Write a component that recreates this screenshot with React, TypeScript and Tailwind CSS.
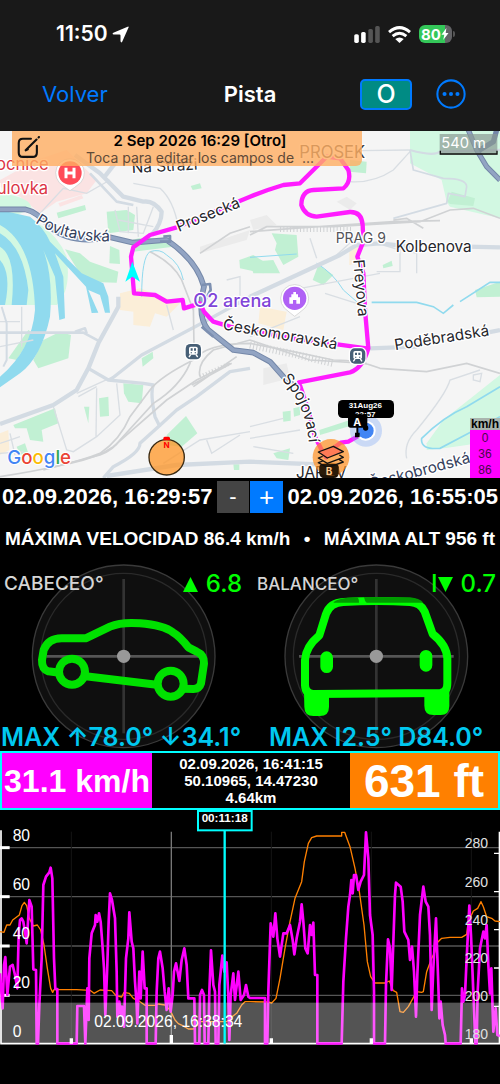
import React from 'react';

const SPEED_TRACE =
    '0,445 8,550 12,420 16,396 22,510 30,425 38,420 45,450 52,490 56,330 60,285 65,280 70,290 75,320 80,355 84,290 88,225 95,245 100,433 108,435 110,655 114,655 118,540 125,400 130,180 138,155 148,142 152,128 157,160 162,400 166,492 172,492 172,655 230,655 232,543 252,543 256,655 262,490 266,585 268,400 275,325 285,300 287,270 292,290 297,265 302,290 308,370 312,430 316,570 322,420 326,290 330,205 336,225 345,280 350,440 352,575 358,530 362,570 366,545 372,605 378,400 385,340 388,262 395,350 400,370 405,470 410,540 412,595 418,440 422,520 428,380 434,490 440,490 440,655 467,655 470,500 475,400 480,380 488,430 494,500 500,555 506,490 512,560 518,510 522,440 528,415 538,468 545,405 553,370 560,420 565,520 583,520 585,655 598,655 600,510 606,495 612,510 614,655 625,655 628,500 633,376 640,480 645,500 647,655 655,655 658,480 667,392 673,440 680,412 685,515 688,645 692,510 700,445 705,525 715,440 722,525 732,510 738,480 745,515 750,519 795,519 795,655 802,655 805,500 812,295 820,335 826,265 832,340 840,395 850,325 860,325 870,300 878,345 883,388 890,340 900,290 905,238 910,290 916,370 923,385 930,300 935,330 940,293 945,450 952,450 952,655 1025,655 1030,470 1038,340 1045,245 1050,210 1054,165 1058,205 1062,150 1068,150 1075,195 1082,170 1092,150 1098,22 1105,100 1110,270 1118,330 1122,500 1122,655 1155,655 1158,480 1164,343 1170,370 1175,495 1180,350 1185,210 1188,173 1202,185 1208,230 1213,320 1225,345 1230,405 1236,365 1242,440 1248,575 1252,450 1260,270 1270,185 1277,230 1285,245 1290,330 1295,555 1300,430 1308,280 1315,480 1318,580 1322,530 1328,600 1335,630 1337,655 1382,655 1386,490 1390,530 1395,510 1400,400 1408,242 1413,330 1420,500 1426,655 1430,655 1433,500 1440,370 1450,320 1455,340 1460,300 1465,420 1470,505 1474,430 1480,620 1487,550 1492,630 1500,633';

const ALTITUDE_TRACE =
    '0,320 12,322 20,300 30,300 38,285 58,270 66,242 73,232 80,242 88,280 100,303 112,300 122,315 132,360 142,430 152,490 158,502 162,494 230,494 270,496 282,505 300,495 335,497 348,512 365,516 372,502 388,505 400,520 420,530 435,541 465,541 475,537 495,540 510,555 525,585 535,596 548,602 565,612 580,612 600,590 640,590 680,590 690,580 710,565 725,540 735,530 750,530 805,531 815,534 828,520 840,460 855,370 870,290 885,220 905,170 913,110 925,55 935,38 950,33 1025,33 1025,22 1034,22 1050,65 1065,130 1078,200 1092,300 1102,410 1112,455 1125,474 1155,474 1168,468 1180,497 1190,502 1200,560 1210,562 1225,545 1250,500 1265,502 1270,500 1280,440 1295,400 1305,380 1310,355 1325,340 1350,337 1385,337 1400,328 1405,290 1420,258 1433,250 1443,230 1450,245 1460,275 1475,280 1485,288 1500,290';

const speedTicks = [
    { label: '80', y: 47, line: 68 },
    { label: '60', y: 194, line: 215 },
    { label: '40', y: 342, line: 363 },
    { label: '20', y: 489, line: 511 },
    { label: '0', y: 637, line: 656 },
];

const altitudeTicks = [
    { label: '280', y: 70 },
    { label: '260', y: 185 },
    { label: '240', y: 299 },
    { label: '220', y: 414 },
    { label: '200', y: 528 },
    { label: '180', y: 643 },
];

const StatusBar: React.FC = () => (
    <div className="flex items-center justify-between px-14 pt-5 font-['Inter',sans-serif]">
        <div className="flex items-center gap-1 text-[21px] leading-7 font-semibold">
            11:50
            <svg viewBox="0 0 50 50" className="h-[17px] w-[17px]" fill="currentColor" aria-hidden="true">
                <path d="M46 2Q51 0 48 6L30 46Q27 51 25 45V28Q25 25 22 25H5Q-1 23 4 20Z" />
            </svg>
        </div>
        <div className="-mr-2 flex items-center gap-2">
            <svg viewBox="0 0 78 52" className="h-[17px] w-[26px]" aria-hidden="true">
                <rect x="0" y="25" width="14" height="27" rx="5" fill="#fff" />
                <rect x="21" y="18" width="14" height="34" rx="5" fill="#fff" />
                <rect x="43" y="9" width="14" height="43" rx="5" fill="#555" />
                <rect x="64" y="0" width="14" height="52" rx="5" fill="#555" />
            </svg>
            <svg viewBox="0 0 70 52" className="h-[17px] w-[23px]" fill="none" stroke="#fff" strokeWidth="9" aria-hidden="true">
                <path d="M3 19Q35-9 67 19" />
                <path d="M14 31Q35 13 56 31" />
                <path d="M35 52L22 40Q35 30 48 40Z" fill="#fff" stroke="none" />
            </svg>
            <div className="relative flex h-[18px] w-[33px] items-center rounded-md bg-[linear-gradient(to_right,#34c759_78%,#636366_78%)] pl-[2px] text-[15px] leading-none font-bold">
                80
                <svg viewBox="0 0 20 34" className="h-3 w-2" fill="#fff" aria-hidden="true">
                    <path d="M14 0L0 19H8L5 34L20 14H12Z" />
                </svg>
                <span className="absolute top-[6px] -right-[3px] h-[6px] w-[2px] rounded-r bg-[#555]" />
            </div>
        </div>
    </div>
);

const NavBar: React.FC = () => (
    <header className="grid grid-cols-[1fr_auto_1fr] items-center px-[34px] pt-[30px] pb-[21px] font-['Inter',sans-serif] text-[22px] leading-8">
        <button className="justify-self-start pl-2 text-[#007aff]">Volver</button>
        <h1 className="text-center font-semibold">Pista</h1>
        <div className="flex items-center gap-6 justify-self-end">
            <button className="flex h-[31px] w-[52px] items-center justify-center rounded-[5px] border-2 border-[#007aff] bg-[#008b84] text-[25px] leading-none font-medium">
                O
            </button>
            <button aria-label="Más opciones">
                <svg viewBox="0 0 88 88" className="h-[30px] w-[30px]" fill="#007aff">
                    <circle cx="44" cy="44" r="40" fill="none" stroke="#007aff" strokeWidth="6" />
                    <circle cx="25" cy="44" r="6" />
                    <circle cx="44" cy="44" r="6" />
                    <circle cx="63" cy="44" r="6" />
                </svg>
            </button>
        </div>
    </header>
);

const StationMarker: React.FC<{ x: number; y: number }> = ({ x, y }) => (
    <g transform={`translate(${x} ${y})`}>
        <rect x="-27" y="-27" width="54" height="54" rx="18" fill="#fff" />
        <rect x="-23" y="-23" width="46" height="46" rx="14" fill="#475f76" />
        <rect x="-13" y="-15" width="26" height="24" rx="5" fill="#fff" />
        <path d="M-8-10H-2V-3H-8ZM2-10H8V-3H2ZM-8 2H-4V5H-8ZM4 2H8V5H4Z" fill="#475f76" />
        <path d="M-8 9L-13 16M8 9L13 16" stroke="#fff" strokeWidth="4" />
    </g>
);

const MapDrawing: React.FC = () => (
    <svg viewBox="0 3 1500 1041" className="block w-full bg-[#f5f5f5] font-['Inter',sans-serif]" role="img" aria-label="Mapa del recorrido">
        <defs>
            <path id="povltavska" d="M105 277Q190 338 345 334" />
            <path id="spojovaci" d="M844 748Q915 815 926 935" />
        </defs>

        {/* built-up areas */}
        <g fill="#fbe3e3">
            <path d="M0 150L110 90L200 60L290 150L260 190L170 215L120 250L60 200L0 170Z" />
            <path d="M175 220L245 195L250 205L180 230Z" />
        </g>
        <g fill="#fbeed8">
            <path d="M360 490L420 475L540 520L500 560L465 550L450 590L400 585L400 545L360 540Z" />
            <path d="M780 530L860 545L850 600L775 580Z" />
            <path d="M1048 350L1075 345L1070 400L1048 405Z" />
            <path d="M0 910L25 900L28 960L0 975Z" />
        </g>
        <g fill="#ebebeb">
            <path d="M1010 215L1040 200L1070 220L1050 240Z" />
            <path d="M790 715L860 700L870 745L790 765Z" />
            <path d="M600 350L750 300L740 330L600 370Z" />
            <path d="M750 270L800 255L830 285L760 300Z" />
        </g>

        {/* parks */}
        <g fill="#d2f8e2">
            <path d="M1230 0H1500V265L1350 230L1340 215L1325 150L1230 100Z" />
            <path d="M0 190Q90 200 95 235L50 255L0 240Z" />
            <path d="M0 250Q150 260 200 380Q215 480 170 525H0Z" />
            <path d="M1280 940L1330 870L1500 735V925Q1400 950 1280 960Z" />
        </g>
        <g fill="#c1f0d3">
            <path d="M1342 215L1355 185L1425 205L1420 228L1350 222Z" />
            <path d="M320 245L380 240L405 255L400 300L325 310Z" />
            <path d="M170 248L255 225L258 240L175 265Z" />
            <path d="M330 348L358 360L360 402L328 400Z" />
            <path d="M195 358L240 370L270 395L355 425L350 458L255 455Z" />
            <path d="M395 330Q460 310 520 350L400 365Z" />
            <path d="M572 168L600 160L605 175L578 180Z" />
            <path d="M718 390L760 375L800 400L790 430L720 415Z" />
            <path d="M815 310L890 315L895 380L850 405L825 360L830 340Z" />
            <path d="M750 395L820 390L840 430L760 430Z" />
            <path d="M955 405L1000 435L970 465L938 450Z" />
            <path d="M1148 405L1175 392L1178 408L1150 415Z" />
            <path d="M1050 90L1100 95L1098 130L1048 125Z" />
            <path d="M1425 480L1500 455V500L1430 502Z" />
            <path d="M130 630L180 605L213 615L205 685L115 715L100 690Z" />
            <path d="M25 685L85 600L100 610L50 690Z" />
            <path d="M425 685L458 665L460 685L428 710Z" />
            <path d="M370 760L430 765L425 820L385 815L372 790Z" />
            <path d="M297 805L325 800L327 858L300 860Z" />
            <path d="M252 830H268L265 880Z" />
            <path d="M40 885L165 835L175 880L125 900L130 935L90 930L80 895L45 895Z" />
            <path d="M500 915L558 858L592 910L545 950L500 945Z" />
            <path d="M848 845L872 842V872L850 875ZM880 835L900 830V855L882 860Z" />
            <path d="M820 970L870 955L865 990L830 985Z" />
            <path d="M958 900L1050 870L1060 885L960 915Z" />
            <path d="M50 950L75 940L85 970L60 975Z" />
            <path d="M700 1003H718V1020H702Z" />
        </g>

        {/* river */}
        <g fill="#90daee">
            <path d="M0 240L90 260Q130 290 150 335L245 430L310 460L325 500L330 548H315L300 495L265 480L295 548L275 549L258 470L165 370L190 440L195 565L178 570L165 440L130 360Q160 440 150 560Q125 680 60 730L0 772V740Q95 660 105 540Q100 340 0 285Z" />
            <path d="M0 310Q70 350 85 480L80 525H35Q50 380 0 350Z" />
            <path d="M0 390Q35 430 15 525H0Z" />
        </g>
        <g fill="none" stroke="#90daee" strokeWidth="5">
            <path d="M425 500Q425 380 450 365Q480 355 500 375Q540 400 550 450" strokeWidth="3" />
            <path d="M750 382L890 372M950 400Q1000 430 1030 480L1070 515" strokeWidth="3" />
            <path d="M1115 517H1250L1300 530L1330 550L1360 525" />
            <path d="M1500 770L1400 830Q1330 860 1265 925Q1260 960 1320 955L1500 860" />
            <path d="M1380 515L1470 457H1500" />
        </g>

        {/* side streets */}
        <g fill="none" stroke="#d9dee3" strokeWidth="4">
            <path d="M120 250L190 175L260 190L330 150M345 240L360 305L430 310L460 230M385 310V230M410 230L415 320M355 270L460 290M400 160L480 175Q520 210 535 290" />
            <path d="M1080 62L1230 60M1050 155Q1120 160 1180 120L1230 65M1150 345L1200 360V425H1130M1185 355L1250 370V430M1140 430L850 485" />
            <path d="M975 490L1070 520M930 325L950 385M1070 320L1010 375" />
            <path d="M0 650L100 630M65 530V650M0 575H60M160 830L200 960L220 965L290 920L360 855L350 760M290 775L288 920M230 790L340 740M235 800L290 770" />
            <path d="M490 1000L600 930L750 905M620 930L635 970L720 915" />
            <path d="M1220 985Q1210 940 1250 900Q1340 790 1350 750L1440 720M1420 735L1445 730L1440 755L1420 750Z" />
            <path d="M0 940L60 920M0 970L70 965M30 910L45 975M750 890L850 865M750 925L900 900M760 950L880 970" />
            <path d="M750 620L900 560M680 450L720 440V500M500 525L520 600" />
        </g>
        <g fill="none" stroke="#d3dbe3" strokeWidth="13" strokeLinejoin="round">
            <path d="M225 75L300 130L370 200L430 215Q460 210 485 245Q485 280 455 315" />
            <path d="M270 130L350 215L400 225" strokeWidth="8" />
            <path d="M345 100L310 145" />
            <path d="M750 500L1020 375L1070 345L1140 340L1230 350" />
            <path d="M1400 350L1500 352" />
            <path d="M1110 655L1250 650M1450 610L1500 600" />
            <path d="M0 882L160 825L230 780L265 715L295 640L355 530V500" />
            <path d="M265 715L325 750L430 760L460 765Q450 790 465 860L480 890M330 750L425 675L605 580L750 500" strokeWidth="10" />
            <path d="M310 1044L340 1010Q420 970 420 940L475 890L530 840L590 800L690 725L750 715" strokeWidth="10" />
            <path d="M320 1038L530 1005L750 995L1000 1005" />
            <path d="M0 608L250 608L300 635M225 605L255 595L260 610" strokeWidth="8" />
            <path d="M1230 60Q1300 80 1320 65L1500 60" strokeWidth="7" />
            <path d="M1230 60L1240 120L1330 145Q1400 145 1400 170L1395 200L1345 190L1340 220L1180 265" strokeWidth="5" />
            <path d="M5 530L20 580V690L10 710" strokeWidth="6" />
        </g>

        {/* railways */}
        <g fill="none" stroke="#d0d2d4" strokeWidth="5">
            <path d="M0 1040Q200 1010 300 970Q360 930 390 860L450 780Q480 740 580 690Q620 640 750 640L880 665L1000 690Q1080 690 1140 715L1280 725L1400 700L1500 730" />
            <path d="M130 1020L300 975Q340 960 360 930L460 820Q540 770 570 700L580 650" />
            <path d="M210 1000Q290 985 340 950L500 810L590 750L690 700" />
            <path d="M580 525L582 650M600 740Q590 700 640 660L750 630L930 690L1100 700" />
            <path d="M580 770L710 680M575 765L695 700" />
            <path d="M750 315L800 290L1000 290L1260 275L1350 240L1420 235L1500 265M750 305L880 295L1180 275L1320 272M1180 270L1220 265L1270 295" />
            <path d="M450 365Q520 400 545 450L580 540M600 370L690 310L750 290" />
        </g>
        <g fill="none" stroke="#d0d2d4" strokeWidth="22" strokeDasharray="3 7">
            <path d="M750 645L880 672L1000 700" />
            <path d="M840 298H1060" strokeWidth="16" />
            <path d="M600 740L690 700" strokeWidth="12" />
        </g>

        {/* main roads */}
        <g fill="none" strokeLinejoin="round">
            <path d="M0 238L75 238Q110 245 150 290Q210 345 330 322L400 338L500 330Q590 390 612 470Q590 560 625 600L700 660L760 668L810 695L850 740L880 765" stroke="#7487a8" strokeWidth="17" />
            <path d="M0 238L75 238Q110 245 150 290Q210 345 330 322L400 338L500 330Q590 390 612 470Q590 560 625 600L700 660L760 668L810 695L850 740L880 765" stroke="#92a4c3" strokeWidth="11" />
            <path d="M605 465L630 462L632 480L600 540M490 320L510 318V335L480 335M605 590L640 620" stroke="#7d90b1" strokeWidth="8" />
            <path d="M1405 0L1430 60L1460 110L1500 150M1430 65L1480 35L1490 0" stroke="#7487a8" strokeWidth="16" />
            <path d="M1405 0L1430 60L1460 110L1500 150" stroke="#92a4c3" strokeWidth="10" />
        </g>

        {/* recorded track */}
        <g fill="none" stroke="#ff1cff" strokeWidth="13" strokeLinejoin="round" strokeLinecap="round">
            <path d="M1072 920L1045 935L1022 938L1000 955L978 982L965 960L945 920L925 840L897 757L1050 727Q1088 715 1105 655L1095 540L1090 430L1072 380L1090 335L1088 285Q1085 245 1050 246L950 260Q915 258 904 225Q905 182 940 180L1030 175Q1055 155 1045 120L1020 85L980 80L900 160L850 165Q800 180 750 200L690 225L530 292L450 315L400 352L393 380L402 490L465 495L500 515L548 510L552 535L600 520L612 545L640 575L690 590L880 625L1100 655" />
        </g>
        <path d="M397 395L420 455L397 440L376 455Z" fill="#00ffff" />

        {/* street and place names */}
        <g fill="#26262b" stroke="#fff" strokeWidth="8" strokeLinejoin="round" fontSize="46" className="[paint-order:stroke]">
            <text x="396" y="129" transform="rotate(-3 396 129)">Na Stráži</text>
            <text x="536" y="306" transform="rotate(-22 536 306)">Prosecká</text>
            <text fill="#34405c" fontSize="46"><textPath href="#povltavska">Povltavská</textPath></text>
            <text x="1187" y="366">Kolbenova</text>
            <text x="1060" y="390" transform="rotate(85 1060 390)" fontSize="46">Freyova</text>
            <text x="667" y="598" transform="rotate(10 667 598)" fontSize="46">Českomoravská</text>
            <text x="1186" y="661" transform="rotate(-9 1186 661)" fontSize="46">Poděbradská</text>
            <text fontSize="46"><textPath href="#spojovaci">Spojovací</textPath></text>
            <text x="1112" y="1078" transform="rotate(-15 1112 1078)" fontSize="46" fill="#34405c">Českobrodská</text>
            <text x="888" y="1044">JAROV</text>
            <text x="898" y="84" fill="#3e3e42" fontSize="50">PROSEK</text>
            <text x="1007" y="338" fill="#55555a" fontSize="42">PRAG 9</text>
            <text x="580" y="530" fill="#8044d8" fontSize="54" fontWeight="500">O2 arena</text>
            <text x="-12" y="120" fill="#dc3545" fontSize="50">ocnice</text>
            <text x="-10" y="193" fill="#dc3545" fontSize="50">ulovka</text>
        </g>

        {/* points of interest */}
        <path d="M210 182Q200 176 178 158A43 43 0 1 1 242 158Q220 176 210 182Z" fill="#fff" stroke="#c9c9c9" strokeWidth="2" />
        <circle cx="210" cy="129" r="35" fill="#ff4b58" />
        <path d="M198 113V145M222 113V145M198 129H222" stroke="#fff" strokeWidth="9" />
        <path d="M884 559Q874 552 853 534A42 42 0 1 1 915 534Q894 552 884 559Z" fill="#fff" stroke="#c9c9c9" strokeWidth="2" />
        <circle cx="884" cy="505" r="35" fill="#b061f5" />
        <path d="M880 486H888V493H894V502H900V521H889V510H879V521H868V502H874V493H880Z" fill="#fff" />
        <StationMarker x={580} y={665} />
        <StationMarker x={1073} y={678} />

        {/* start and current position */}
        <circle cx="1098" cy="902" r="48" fill="#7aa5f5" opacity="0.35" />
        <circle cx="1097" cy="902" r="30" fill="#fff" />
        <circle cx="1097" cy="902" r="24" fill="#4285f4" />
        <rect x="1014" y="810" width="168" height="54" rx="14" />
        <g fill="#fff" fontSize="24" fontWeight="700" textAnchor="middle" className="font-['Liberation_Sans',sans-serif]">
            <text x="1096" y="834">31Aug26</text>
            <text x="1096" y="861">22:57</text>
        </g>
        <circle cx="1097" cy="894" r="8" />
        <path d="M1052 853H1092Q1102 853 1102 863V893H1075V908H1079V922H1065V908H1069V893H1052Q1044 893 1044 885V861Q1044 853 1052 853Z" />
        <text x="1072" y="887" fill="#fff" fontSize="32" fontWeight="700" textAnchor="middle">A</text>
        <rect x="958" y="1000" width="58" height="44" rx="14" fill="#1c1208" />
        <circle cx="993" cy="982" r="55" fill="#ff8f1f" opacity="0.7" />
        <path d="M958 1012Q958 1002 970 1002H1004Q1016 1002 1016 1012V1032L1008 1036H970L958 1030Z" fill="#2a1a08" />
        <g fill="none" stroke="#111" strokeWidth="4" strokeLinejoin="round">
            <path d="M955 966L1000 949L1030 965L982 984Z" fill="#ff7b56" />
            <path d="M968 979L955 984L982 1000L1030 982L1018 975M968 993L955 998L982 1013L1030 996L1018 989" />
        </g>
        <text x="987" y="1034" fill="#ffc98c" fontSize="30" fontWeight="700" textAnchor="middle">B</text>

        {/* compass */}
        <circle cx="500" cy="982" r="53" fill="#ff9626" fillOpacity="0.75" stroke="#3a2a12" strokeWidth="4" />
        <path d="M490 931V923L494 920H506L510 923V931Z" fill="red" />
        <text x="500" y="955" fill="red" fontSize="24" fontWeight="700" textAnchor="middle">N</text>

        <text x="22" y="1003" fontSize="56" fontWeight="500" stroke="#fff" strokeWidth="6" className="[paint-order:stroke]">
            <tspan fill="#4285f4">G</tspan>
            <tspan fill="#ea4335">o</tspan>
            <tspan fill="#fbbc05">o</tspan>
            <tspan fill="#4285f4">g</tspan>
            <tspan fill="#34a853">l</tspan>
            <tspan fill="#ea4335">e</tspan>
        </text>

        <rect x="1319" y="12" width="173" height="62" fill="#8a9a94" opacity="0.7" />
        <path d="M1321 62V72H1491V62" fill="none" stroke="#111" strokeWidth="4" />
        <text x="1324" y="55" fill="#fff" fontSize="44">540 m</text>
    </svg>
);

const TrackMap: React.FC = () => (
    <section className="relative">
        <MapDrawing />
        <button className="absolute top-0 left-3 h-[35px] w-[70%] rounded-br-md bg-[#ffae62]/80 text-center font-['Inter',sans-serif]">
            <svg viewBox="0 0 66 66" className="absolute top-[5px] left-[5px] h-[23px] w-[23px]" fill="none" stroke="#111" strokeWidth="6" strokeLinecap="round">
                <path d="M40 8H17Q5 8 5 20V48Q5 60 17 60H45Q57 60 57 48V28" />
                <path d="M27 39L56 10M62 4L63 3M25 41L31 38" />
            </svg>
            <span className="block pl-[26px] text-[15px] leading-[19px] font-semibold text-black">2 Sep 2026 16:29 [Otro]</span>
            <span className="block pl-[26px] text-[14px] leading-4 whitespace-pre text-[#5f4a38]">Toca para editar los campos de  ...</span>
        </button>
        <div className="absolute right-0 bottom-0 w-[30px] bg-[#ff00ff] text-center font-['Liberation_Sans',sans-serif] text-[12px] leading-4 text-[#4a084a]">
            <div className="-mt-[6px] bg-[#a9b5ae] leading-3 font-bold text-black">km/h</div>
            <div>0</div>
            <div>36</div>
            <div>86</div>
        </div>
    </section>
);

const Crosshair: React.FC<{ cx: number }> = ({ cx }) => (
    <g fill="none" stroke="#3a3a3a" strokeWidth="4">
        <circle cx={cx} cy="289" r="274" fill="#0f0f0f" />
        <circle cx={cx} cy="289" r="249" stroke="#2a2a2a" />
        <path d={`M${cx} 57V520`} stroke="#333" strokeWidth="8" />
        <path d={`M${cx - 232} 289H${cx + 232}`} stroke="#555" strokeWidth="8" />
    </g>
);

const Gauge: React.FC<{ title: string; value: React.ReactNode; max: string; titleClass: string; maxClass: string; children: React.ReactNode }> = ({
    title,
    value,
    max,
    titleClass,
    maxClass,
    children,
}) => (
    <div className="relative font-['Inter',sans-serif]">
        <svg viewBox="0 0 750 573" className="block w-full" aria-hidden="true">
            {children}
        </svg>
        <div className="absolute inset-x-0 top-2 flex items-center justify-between pr-1 leading-8">
            <span className={titleClass}>{title}</span>
            <span className="flex items-center text-[24px] font-medium text-[#00ff00]">{value}</span>
        </div>
        <div className={maxClass}>{max}</div>
    </div>
);

const Gauges: React.FC = () => (
    <section className="grid grid-cols-2">
        <Gauge
            title="CABECEO°"
            titleClass="pl-1 text-[19px] font-medium text-[#d5d5d5]"
            max="MAX ↑78.0° ↓34.1°"
            maxClass="absolute bottom-0 left-0 whitespace-nowrap pl-px text-[25px] leading-7 font-semibold text-[#00c8f0]"
            value={
                <>
                    <svg viewBox="0 0 46 46" className="mr-2 h-[15px] w-[15px]" fill="currentColor">
                        <path d="M23 0L46 46H0Z" />
                    </svg>
                    <span className="pr-1">6.8</span>
                </>
            }
        >
            <Crosshair cx={371} />
            <g fill="none" stroke="#00e100" strokeWidth="24" strokeLinejoin="round">
                <path d="M178 338L145 334Q125 328 126 300L131 270Q145 235 185 235H257L330 200Q365 185 420 190Q490 195 520 218Q540 230 565 262L590 275Q613 285 612 310L603 370Q598 387 580 387L552 386M257 349L470 374" />
                <circle cx="216" cy="335" r="39" />
                <circle cx="512" cy="371" r="39" />
            </g>
            <circle cx="371" cy="289" r="20" fill="#999" />
        </Gauge>
        <Gauge
            title="BALANCEO°"
            titleClass="pl-[7px] text-[17px] font-medium text-[#d5d5d5]"
            max="MAX I2.5° D84.0°"
            maxClass="absolute bottom-0 left-0 whitespace-nowrap pl-[19px] text-[25px] leading-7 font-semibold text-[#00c8f0]"
            value={
                <>
                    I
                    <svg viewBox="0 0 46 46" className="mr-2 h-[15px] w-[15px]" fill="currentColor">
                        <path d="M0 0H46L23 46Z" />
                    </svg>
                    0.7
                </>
            }
        >
            <Crosshair cx={379} />
            <g fill="none" stroke="#00ff00" strokeWidth="24" strokeLinejoin="round">
                <path d="M208 226L228 162Q240 128 280 126Q380 120 480 126Q512 128 524 155L548 222Q590 255 592 295V370Q592 398 570 399L190 402Q166 402 165 375V300Q167 260 208 226Z" />
                <rect x="221" y="284" width="18" height="45" rx="9" strokeWidth="20" />
                <rect x="519" y="280" width="18" height="45" rx="9" strokeWidth="20" />
            </g>
            <path d="M162 395L237 405V440Q237 468 210 468H190Q163 468 163 440Z" fill="#00ff00" />
            <path d="M523 405L598 395V437Q598 465 572 465H550Q523 465 523 437Z" fill="#00ff00" />
            <path d="M250 128Q260 114 320 112Q327 113 327 128ZM342 111L480 112Q508 115 520 128H350Q344 124 342 111Z" fill="#009a00" />
            <circle cx="379" cy="289" r="20" fill="#999" />
        </Gauge>
    </section>
);

const TrackChart: React.FC = () => (
    <svg viewBox="0 -45 1500 720" className="block w-full" role="img" aria-label="Velocidad y altitud">
        <g stroke="#555" strokeWidth="4">
            {speedTicks.slice(0, 4).map(tick => (
                <path key={tick.label} d={`M0 ${tick.line}H1500`} />
            ))}
            <path d="M514 20V656" stroke="#777" />
        </g>
        <g stroke="#151515" strokeWidth="3">
            <path d="M214 20V656M814 20V656M1114 20V656M1414 20V656" />
        </g>
        <g stroke="#fff" strokeWidth="9">
            {speedTicks.slice(0, 4).map(tick => (
                <path key={tick.label} d={`M0 ${tick.line}H29`} />
            ))}
        </g>
        <path d="M3 16V656H1500" fill="none" stroke="#fff" strokeWidth="5" />
        <path d="M1498 20V656M1482 85H1500M1482 200H1500M1482 314H1500M1482 429H1500M1482 544H1500" fill="none" stroke="#fff" strokeWidth="4" />
        <polyline points={ALTITUDE_TRACE} fill="none" stroke="#ff8000" strokeWidth="4" strokeLinejoin="round" />
        <polyline points={SPEED_TRACE} fill="none" stroke="#ff00ff" strokeWidth="8" strokeLinejoin="round" />
        <rect x="0" y="533" width="1500" height="122" fill="#fff" opacity="0.33" />
        <path d="M214 640V656M514 630V656M814 640V656M1114 640V656M1414 640V656" stroke="#fff" strokeWidth="10" />
        <path d="M674 16V656" stroke="#00ffff" strokeWidth="7" />
        <g fill="#fff" fontSize="47" className="font-['Liberation_Sans',sans-serif]">
            {speedTicks.map(tick => (
                <text key={tick.label} x="38" y={tick.y}>{tick.label}</text>
            ))}
            <text x="283" y="606">02.09.2026, 16:38:34</text>
        </g>
        <g fill="#e0e0e0" fontSize="42" textAnchor="end" className="font-['Liberation_Sans',sans-serif]">
            {altitudeTicks.map(tick => (
                <text key={tick.label} x="1464" y={tick.y}>{tick.label}</text>
            ))}
        </g>
        <rect x="594" y="-42" width="161" height="58" fill="#000" stroke="#00ffff" strokeWidth="6" />
        <text x="674" y="-8" fill="#fff" fontSize="35" fontWeight="700" textAnchor="middle" className="font-['Liberation_Sans',sans-serif]">
            00:11:18
        </text>
    </svg>
);

const App: React.FC = () => {
    return (
        <main className="min-h-screen bg-black font-['Liberation_Sans',sans-serif] text-white">
            <div className="bg-[#191919]">
                <StatusBar />
                <NavBar />
            </div>
            <TrackMap />

            <div className="flex items-center justify-between px-[2px] pt-[3px] text-[22px] leading-8 font-bold whitespace-nowrap">
                <span>02.09.2026, 16:29:57</span>
                <div className="flex gap-px font-normal">
                    <button className="h-8 w-8 bg-[#444]">-</button>
                    <button className="h-8 w-[33px] bg-[#007aff] text-[26px]">+</button>
                </div>
                <span>02.09.2026, 16:55:05</span>
            </div>

            <div className="flex justify-between px-[5px] pt-[14px] pb-[9px] text-[19px] leading-6 font-bold whitespace-nowrap">
                <span>MÁXIMA VELOCIDAD 86.4 km/h</span>
                <span>•</span>
                <span>MÁXIMA ALT 956 ft</span>
            </div>

            <Gauges />

            <div className="grid h-[59px] grid-cols-[150px_1fr_148px] border-2 border-[#00ffff] text-center font-bold whitespace-nowrap">
                <div className="flex items-center justify-center bg-[#ff00ff] text-[32px] leading-none">31.1 km/h</div>
                <div className="flex flex-col justify-center text-[15px] leading-[17px]">
                    <span>02.09.2026, 16:41:15</span>
                    <span>50.10965, 14.47230</span>
                    <span>4.64km</span>
                </div>
                <div className="flex items-center justify-center bg-[#ff8000] text-[46px] leading-none">631 ft</div>
            </div>

            <TrackChart />
        </main>
    );
};

export default App;
